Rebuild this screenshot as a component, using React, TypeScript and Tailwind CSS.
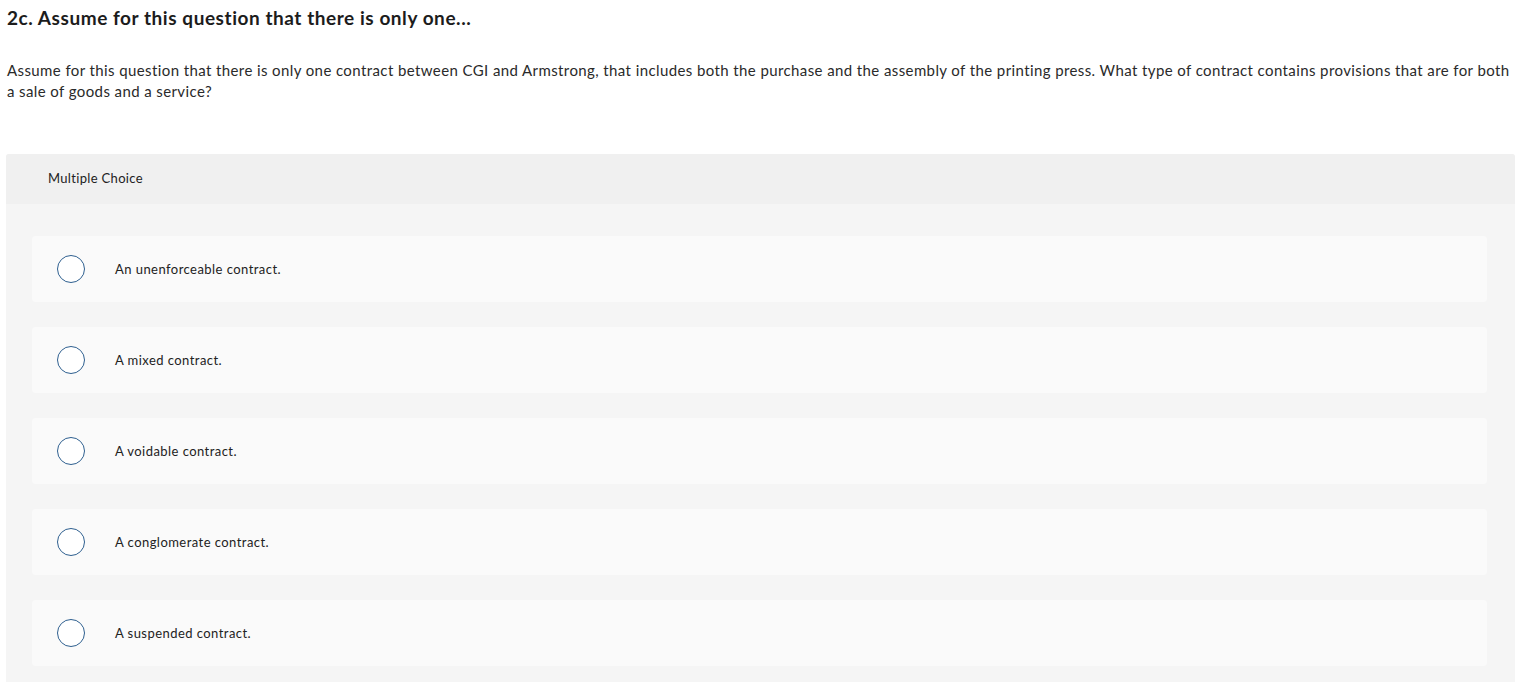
const options = [
  "An unenforceable contract.",
  "A mixed contract.",
  "A voidable contract.",
  "A conglomerate contract.",
  "A suspended contract.",
];

const App = () => {
  return (
    <div className="min-h-screen bg-white px-[6px] font-['Lato','Open_Sans',sans-serif] text-[#1c1c1c]">
      <h2 className="pt-[6px] pl-px text-[19px] font-bold leading-6 tracking-[0.55px]">
        2c. Assume for this question that there is only one...
      </h2>
      <p className="mt-[30px] pl-px text-[15px] leading-[21px] tracking-[0.4px] text-[#2a2a2a]">
        Assume for this question that there is only one contract between CGI and Armstrong, that includes both the purchase and the assembly of the printing press. What type of contract contains provisions that are for both a sale of goods and a service?
      </p>
      <div className="mt-[52px] w-[1509px] rounded-t-[3px] bg-[#f5f5f5]">
        <div className="flex h-[50px] items-center rounded-t-[3px] bg-[#f0f0f0] pl-[42px] text-[13px] tracking-[0.33px] text-[#222]">
          Multiple Choice
        </div>
        <div className="flex flex-col gap-[25px] pt-8 pb-6 pl-[26px] pr-[28px]">
          {options.map((opt) => (
            <label
              key={opt}
              className="flex h-[66px] cursor-pointer items-center rounded-[4px] bg-[#fafafa] pl-[25px]"
            >
              <span className="h-[28px] w-[28px] shrink-0 rounded-full border-[1.5px] border-[#2e5f8f] bg-white" />
              <span className="ml-[30px] pt-px text-[13px] tracking-[0.45px] text-[#222]">{opt}</span>
            </label>
          ))}
        </div>
      </div>
    </div>
  );
};

export default App;
